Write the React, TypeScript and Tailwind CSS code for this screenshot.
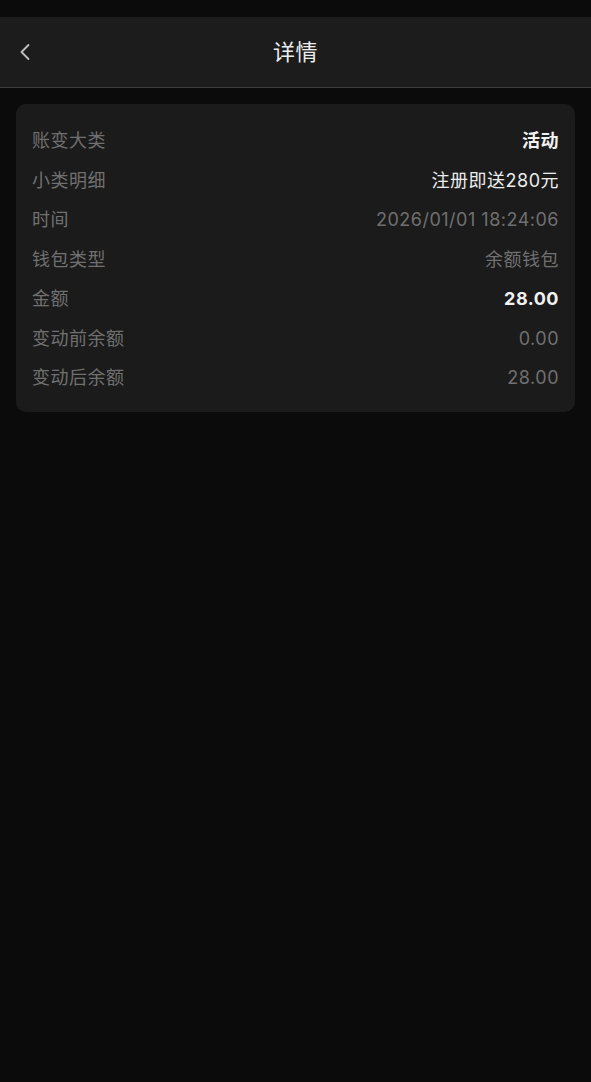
import { ChevronLeft } from 'lucide-react';

const rows = [
  { label: '账变大类', value: '活动', tone: 'bold' },
  { label: '小类明细', value: '注册即送280元', tone: 'light' },
  { label: '时间', value: '2026/01/01 18:24:06', tone: 'muted' },
  { label: '钱包类型', value: '余额钱包', tone: 'muted' },
  { label: '金额', value: '28.00', tone: 'bold' },
  { label: '变动前余额', value: '0.00', tone: 'muted' },
  { label: '变动后余额', value: '28.00', tone: 'muted' },
];

const toneClass: Record<string, string> = {
  bold: 'text-[#f2f2f2] font-bold',
  light: 'text-[#ececec]',
  muted: 'text-[#707070]',
};

export default function App() {
  return (
    <div
      className="min-h-screen w-full bg-[#0b0b0b] flex flex-col"
      style={{ fontFamily: 'Inter, "Noto Sans CJK SC", sans-serif' }}
    >
      <div className="h-[17px] bg-[#0b0b0b]" />
      <header className="relative h-[71px] bg-[#1c1c1c] border-b border-[#3d3d3d] flex items-center justify-center">
        <button className="absolute left-[11px] top-1/2 -translate-y-1/2 text-[#bdbdbd]">
          <ChevronLeft className="w-7 h-7" strokeWidth={1.6} />
        </button>
        <h1 className="text-[22px] text-[#ececec] tracking-wide">详情</h1>
      </header>

      <div className="px-4 pt-4">
        <div className="rounded-[10px] bg-[#1b1b1b] px-4 pt-[17px] pb-[14px]">
          {rows.map(row => (
            <div key={row.label} className="h-[39.5px] flex items-center justify-between text-[18px] tracking-[0.5px]">
              <span className="text-[#707070]">{row.label}</span>
              <span className={toneClass[row.tone]}>{row.value}</span>
            </div>
          ))}
        </div>
      </div>
    </div>
  );
}
